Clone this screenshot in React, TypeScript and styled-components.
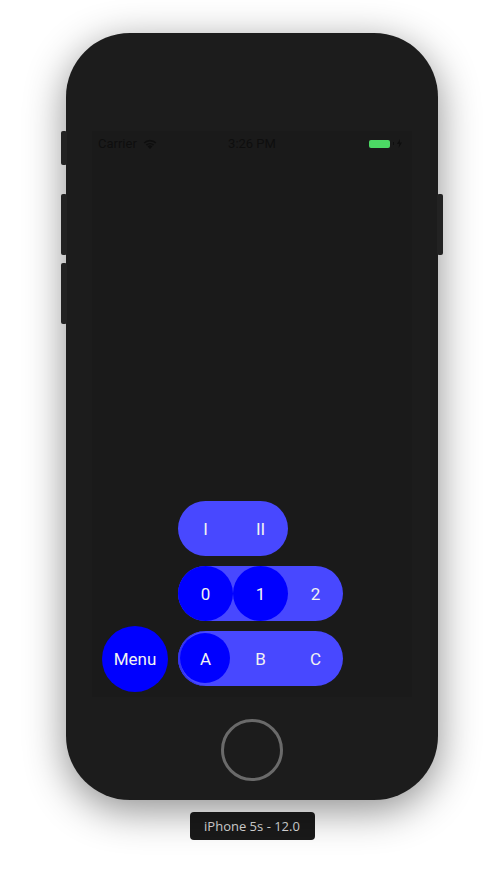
import * as React from "react";
import styled, { createGlobalStyle } from "styled-components";

const GlobalStyle = createGlobalStyle`
  html, body {
    margin: 0;
    padding: 0;
    background: #ffffff;
    font-family: Roboto, "Liberation Sans", sans-serif;
  }
`;

const Page = styled.div`
  width: 504px;
  height: 882px;
  display: flex;
  flex-direction: column;
  align-items: center;
  padding-top: 33px;
  box-sizing: border-box;
  overflow: hidden;
`;

const Phone = styled.div`
  position: relative;
  width: 372px;
  height: 767px;
  border-radius: 64px;
  background: #1c1c1c;
  box-shadow: 0 10px 40px rgba(0, 0, 0, 0.45);
  display: flex;
  flex-direction: column;
  align-items: center;
  padding-top: 98px;
  box-sizing: border-box;
`;

const SideKey = styled.div<{ $side: "left" | "right"; $top: number; $h: number }>`
  position: absolute;
  top: ${({ $top }) => $top}px;
  ${({ $side }) => ($side === "left" ? "left: -5px;" : "right: -5px;")}
  width: 6px;
  height: ${({ $h }) => $h}px;
  border-radius: 2px;
  background: #222222;
`;

const Screen = styled.div`
  width: 320px;
  height: 566px;
  background: #1a1a1a;
  display: flex;
  flex-direction: column;
  justify-content: space-between;
`;

const StatusBar = styled.div`
  height: 25px;
  display: grid;
  grid-template-columns: 1fr auto 1fr;
  align-items: center;
  padding: 0 6px;
  font-size: 13px;
  color: #0e0e0e;
`;

const Carrier = styled.div`
  display: flex;
  align-items: center;
  gap: 6px;
`;

const Clock = styled.div`
  text-align: center;
`;

const BatteryWrap = styled.div`
  display: flex;
  justify-content: flex-end;
  align-items: center;
  gap: 3px;
  padding-right: 4px;
`;

const Battery = styled.div`
  width: 21px;
  height: 8px;
  border-radius: 2px;
  background: #4cd964;
`;

const Nub = styled.div`
  width: 1px;
  height: 3px;
  background: #0e0e0e;
`;

const Controls = styled.div`
  display: grid;
  grid-template-columns: 86px auto;
  grid-template-rows: repeat(3, 55px);
  row-gap: 10px;
  padding-bottom: 11px;
`;

const MenuSlot = styled.div`
  grid-column: 1;
  grid-row: 3;
  display: flex;
  align-items: center;
  padding-left: 10px;
`;

const MenuButton = styled.div`
  width: 66px;
  height: 66px;
  border-radius: 50%;
  background: #0000ff;
  color: #f2f2f2;
  font-size: 17px;
  display: flex;
  align-items: center;
  justify-content: center;
`;

const Pill = styled.div<{ $row: number; $edge?: boolean }>`
  grid-column: 2;
  grid-row: ${({ $row }) => $row};
  justify-self: start;
  display: flex;
  height: 55px;
  border-radius: 28px;
  background: #4848ff;
  box-shadow: ${({ $edge }) => ($edge ? "inset 2px 0 0 #3434f0" : "none")};
`;

const Cell = styled.div<{ $active?: "full" | "inset" }>`
  width: 55px;
  height: 55px;
  display: flex;
  align-items: center;
  justify-content: center;
  position: relative;
  color: #f2f2f2;
  font-size: 17px;

  &::before {
    content: "";
    display: ${({ $active }) => ($active ? "block" : "none")};
    position: absolute;
    inset: ${({ $active }) => ($active === "inset" ? "2px 3px 3px 2px" : "0")};
    border-radius: 50%;
    background: #0000ff;
  }
`;

const CellText = styled.span`
  position: relative;
`;

const HomeButton = styled.div`
  margin-top: 22px;
  width: 56px;
  height: 56px;
  border-radius: 50%;
  border: 3px solid #6a6a6a;
`;

const DeviceLabel = styled.div`
  margin-top: 12px;
  width: 125px;
  height: 28px;
  border-radius: 4px;
  background: #1a1a1a;
  color: #dcdcdc;
  font-size: 13px;
  display: flex;
  align-items: center;
  justify-content: center;
  font-family: "Open Sans", Roboto, sans-serif;
`;

const Wifi = () => (
  <svg width="14" height="10" viewBox="0 0 14 10">
    <path d="M7 10 L4.6 7.4 A3.4 3.4 0 0 1 9.4 7.4 Z" fill="#0e0e0e" />
    <path d="M2.8 5.6 A6 6 0 0 1 11.2 5.6 L10 6.8 A4.3 4.3 0 0 0 4 6.8 Z" fill="#0e0e0e" />
    <path d="M0.6 3.4 A9 9 0 0 1 13.4 3.4 L12.2 4.6 A7.3 7.3 0 0 0 1.8 4.6 Z" fill="#0e0e0e" />
  </svg>
);

const Bolt = () => (
  <svg width="5" height="9" viewBox="0 0 5 9">
    <path d="M3 0 L0 5 L2.2 5 L1.6 9 L5 3.6 L2.8 3.6 Z" fill="#0e0e0e" />
  </svg>
);

const App = () => {
  return (
    <Page>
      <GlobalStyle />
      <Phone>
        <SideKey $side="left" $top={98} $h={34} />
        <SideKey $side="left" $top={161} $h={61} />
        <SideKey $side="left" $top={230} $h={61} />
        <SideKey $side="right" $top={161} $h={61} />

        <Screen>
          <StatusBar>
            <Carrier>
              Carrier <Wifi />
            </Carrier>
            <Clock>3:26 PM</Clock>
            <BatteryWrap>
              <Battery />
              <Nub />
              <Bolt />
            </BatteryWrap>
          </StatusBar>

          <Controls>
            <Pill $row={1}>
              <Cell>
                <CellText>I</CellText>
              </Cell>
              <Cell>
                <CellText>II</CellText>
              </Cell>
            </Pill>
            <Pill $row={2}>
              <Cell $active="full">
                <CellText>0</CellText>
              </Cell>
              <Cell $active="full">
                <CellText>1</CellText>
              </Cell>
              <Cell>
                <CellText>2</CellText>
              </Cell>
            </Pill>
            <MenuSlot>
              <MenuButton>Menu</MenuButton>
            </MenuSlot>
            <Pill $row={3} $edge>
              <Cell $active="inset">
                <CellText>A</CellText>
              </Cell>
              <Cell>
                <CellText>B</CellText>
              </Cell>
              <Cell>
                <CellText>C</CellText>
              </Cell>
            </Pill>
          </Controls>
        </Screen>

        <HomeButton />
      </Phone>
      <DeviceLabel>iPhone 5s - 12.0</DeviceLabel>
    </Page>
  );
};

export default App;
